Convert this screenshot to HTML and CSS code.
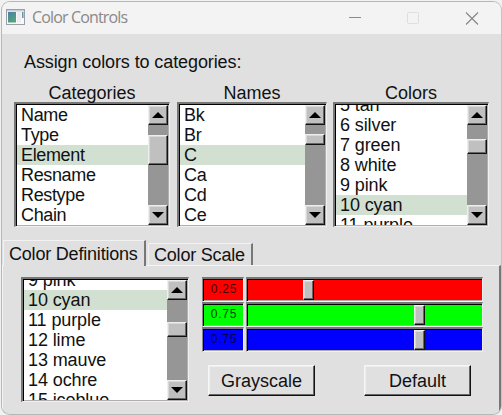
FILE: index.html
```
<!DOCTYPE html>
<html lang="en">
<head>
<meta charset="utf-8">
<title>Color Controls</title>
<link rel="stylesheet" href="styles.css">
</head>
<body>
<div class="window">
  <header class="titlebar">
    <svg class="app-icon" width="19" height="16" viewBox="0 0 19 16">
      <defs><linearGradient id="g" x1="0" y1="0" x2="0.6" y2="1"><stop offset="0" stop-color="#4c7fab"/><stop offset="1" stop-color="#55a478"/></linearGradient></defs>
      <rect x="0.5" y="0.5" width="18" height="15" fill="#f8f8f8" stroke="#9a9fa8"/>
      <rect x="1" y="1" width="17" height="1.5" fill="#c8ccd4"/>
      <rect x="2" y="3" width="8" height="10.5" fill="url(#g)"/>
      <rect x="11" y="3" width="4" height="10.5" fill="#ececec"/>
      <rect x="16" y="3" width="1.5" height="6" fill="#5f93a8"/>
    </svg>
    <span class="title">Color Controls</span>
    <svg class="controls" width="130" height="14" viewBox="0 0 130 14" fill="none">
      <path d="M0 6.5h12" stroke="#8b8b8b"/>
      <rect x="58.5" y="1.5" width="11" height="11" rx="1" stroke="#dedede"/>
      <path d="M117 1.5l12 12M129 1.5l-12 12" stroke="#858585" stroke-width="1.1"/>
    </svg>
  </header>
  <p class="prompt">Assign colors to categories:</p>
  <div class="browsers">
    <section class="column categories">
      <h2>Categories</h2>
      <div class="list">
        <ul><li>Name</li><li>Type</li><li class="selected">Element</li><li>Resname</li><li>Restype</li><li>Chain</li></ul>
        <div class="scrollbar"><i class="arrow up"></i><i class="thumb"></i><i class="arrow down"></i></div>
      </div>
    </section>
    <section class="column names">
      <h2>Names</h2>
      <div class="list">
        <ul><li>Bk</li><li>Br</li><li class="selected">C</li><li>Ca</li><li>Cd</li><li>Ce</li></ul>
        <div class="scrollbar"><i class="arrow up"></i><i class="thumb"></i><i class="arrow down"></i></div>
      </div>
    </section>
    <section class="column colors">
      <h2>Colors</h2>
      <div class="list">
        <ul class="scrolled"><li>5 tan</li><li>6 silver</li><li>7 green</li><li>8 white</li><li>9 pink</li><li class="selected">10 cyan</li><li>11 purple</li></ul>
        <div class="scrollbar"><i class="arrow up"></i><i class="thumb"></i><i class="arrow down"></i></div>
      </div>
    </section>
  </div>
  <nav class="tabs"><span class="tab active">Color Definitions</span><span class="tab">Color Scale</span></nav>
  <div class="panel">
    <div class="list definitions">
      <ul class="scrolled"><li>9 pink</li><li class="selected">10 cyan</li><li>11 purple</li><li>12 lime</li><li>13 mauve</li><li>14 ochre</li><li>15 iceblue</li></ul>
      <div class="scrollbar"><i class="arrow up"></i><i class="thumb"></i><i class="arrow down"></i></div>
    </div>
    <div class="editor">
      <div class="slider red"><span class="value">0.25</span><div class="track"><i class="knob"></i></div></div>
      <div class="slider green"><span class="value">0.75</span><div class="track"><i class="knob"></i></div></div>
      <div class="slider blue"><span class="value">0.75</span><div class="track"><i class="knob"></i></div></div>
      <div class="buttons"><button>Grayscale</button><button>Default</button></div>
    </div>
  </div>
</div>
</body>
</html>
```
FILE: styles.css
```
* { box-sizing: border-box; }
body { margin: 0; background: #f0f1f1; font: 18px/20px "Liberation Sans", Arial, sans-serif; color: #111; overflow: hidden; }
.window { width: 501px; height: 414px; margin: 1px 0 0 1px; border: 1px solid #b4b8b7; border-right-color: #c4c4c4; border-radius: 9px; background: #e0e0e0; overflow: hidden; display: flex; flex-direction: column; }
.titlebar { height: 32px; flex: none; background: #f3f3f3; display: flex; align-items: center; padding-left: 4px; }
.app-icon { margin-top: -2px; }
.title { margin: -2px 0 0 7px; font: 16px/20px "Open Sans", "Noto Sans", sans-serif; color: #898989; letter-spacing: -0.85px; white-space: nowrap; }
.controls { margin-left: auto; margin-right: 22px; }
.prompt { margin: 18px 0 0 22px; height: 20px; white-space: nowrap; letter-spacing: -0.1px; }
.browsers { display: flex; margin: 11px 0 0 12px; }
.column h2 { margin: 0; font: inherit; text-align: center; height: 19px; }
.categories { width: 156px; margin-right: 7px; }
.names { width: 150px; margin-right: 6px; }
.colors { width: 156px; }
.list { display: flex; height: 125px; border: solid; border-width: 2px 1px 1px 2px; border-color: #777 #f0f0f0 #f0f0f0 #777; padding: 1px; box-shadow: inset 1px 1px #000, inset -1px -1px #b0b0b0; background: #fff; overflow: hidden; }
.list ul { flex: 1; margin: 0; padding: 0; list-style: none; overflow: hidden; height: 120px; }
.list li { height: 20px; line-height: 21px; padding-left: 4px; white-space: nowrap; letter-spacing: -0.35px; }
.list .scrolled li { letter-spacing: -0.1px; }
.scrolled li:first-child { margin-top: -10px; }
.selected { background: #d2e0d2; }
.scrollbar { width: 20px; height: 120px; flex: none; background: #969696; display: flex; flex-direction: column; }
.arrow, .thumb, .knob { display: block; background: #c0c0c0; border: 1px solid; border-color: #eee #111 #111 #eee; box-shadow: inset -1px -1px #666, inset 1px 1px #d8d8d8; flex: none; }
.arrow { height: 20px; display: flex; align-items: center; justify-content: center; }
.arrow::before { content: ""; border: 6px solid transparent; border-top-width: 0; border-bottom: 6px solid #000; }
.down::before { transform: rotate(180deg); }
.down { margin-top: auto; }
.categories .thumb { height: 30px; margin-top: 10px; }
.names .thumb { height: 11px; margin-top: 9px; }
.colors .thumb { height: 15px; margin-top: 14px; }
.definitions .thumb { height: 15px; margin-top: 22px; }
.tabs { display: flex; align-items: flex-end; height: 26px; margin-top: 12px; padding-left: 1px; position: relative; }
.tab { height: 22px; line-height: 23px; width: 105px; margin-left: 2px; padding-left: 5px; white-space: nowrap; letter-spacing: -0.2px; border: solid; border-width: 1px 2px 0 1px; border-color: #f2f2f2 #777 #777 #f2f2f2; }
.tab.active { height: 26px; line-height: 27px; width: 143px; margin-left: 0; padding-left: 5px; margin-bottom: -1px; background: #e0e0e0; }
.panel { flex: 1; display: flex; border: solid; border-width: 1px 2px 0 1px; border-color: #f4f4f4 #777 #777 #f4f4f4; padding: 11px 0 0 18px; }
.definitions { width: 168px; margin-right: 13px; }
.editor { width: 281px; }
.slider { display: flex; height: 25px; justify-content: space-between; }
.value, .track { border: solid; border-width: 2px 1px 1px 1px; border-color: #777 #eee #f0f0f0 #888; box-shadow: inset 1px 1px #000, inset 0 -1px #aaa; background: var(--c); }
.value { width: 42px; text-align: center; font-size: 12px; line-height: 21px; letter-spacing: .8px; padding-left: 2px; color: var(--t); }
.track { width: 237px; padding: 1px 0 0 1px; }
.red { --c: #f00; --t: #400; }
.green { --c: #0f0; --t: #040; }
.blue { --c: #00f; --t: #004; }
.knob { width: 11px; height: 20px; margin-left: 166px; }
.red .knob { margin-left: 55px; }
.buttons { display: flex; gap: 49px; margin: 13px 0 0 6px; }
button { width: 107px; height: 31px; padding: 0; font: inherit; color: inherit; background: #e0e0e0; border: 1px solid; border-color: #f6f6f6 #111 #111 #f6f6f6; box-shadow: inset -1px -1px #666, inset 1px 1px #eee; }
```
